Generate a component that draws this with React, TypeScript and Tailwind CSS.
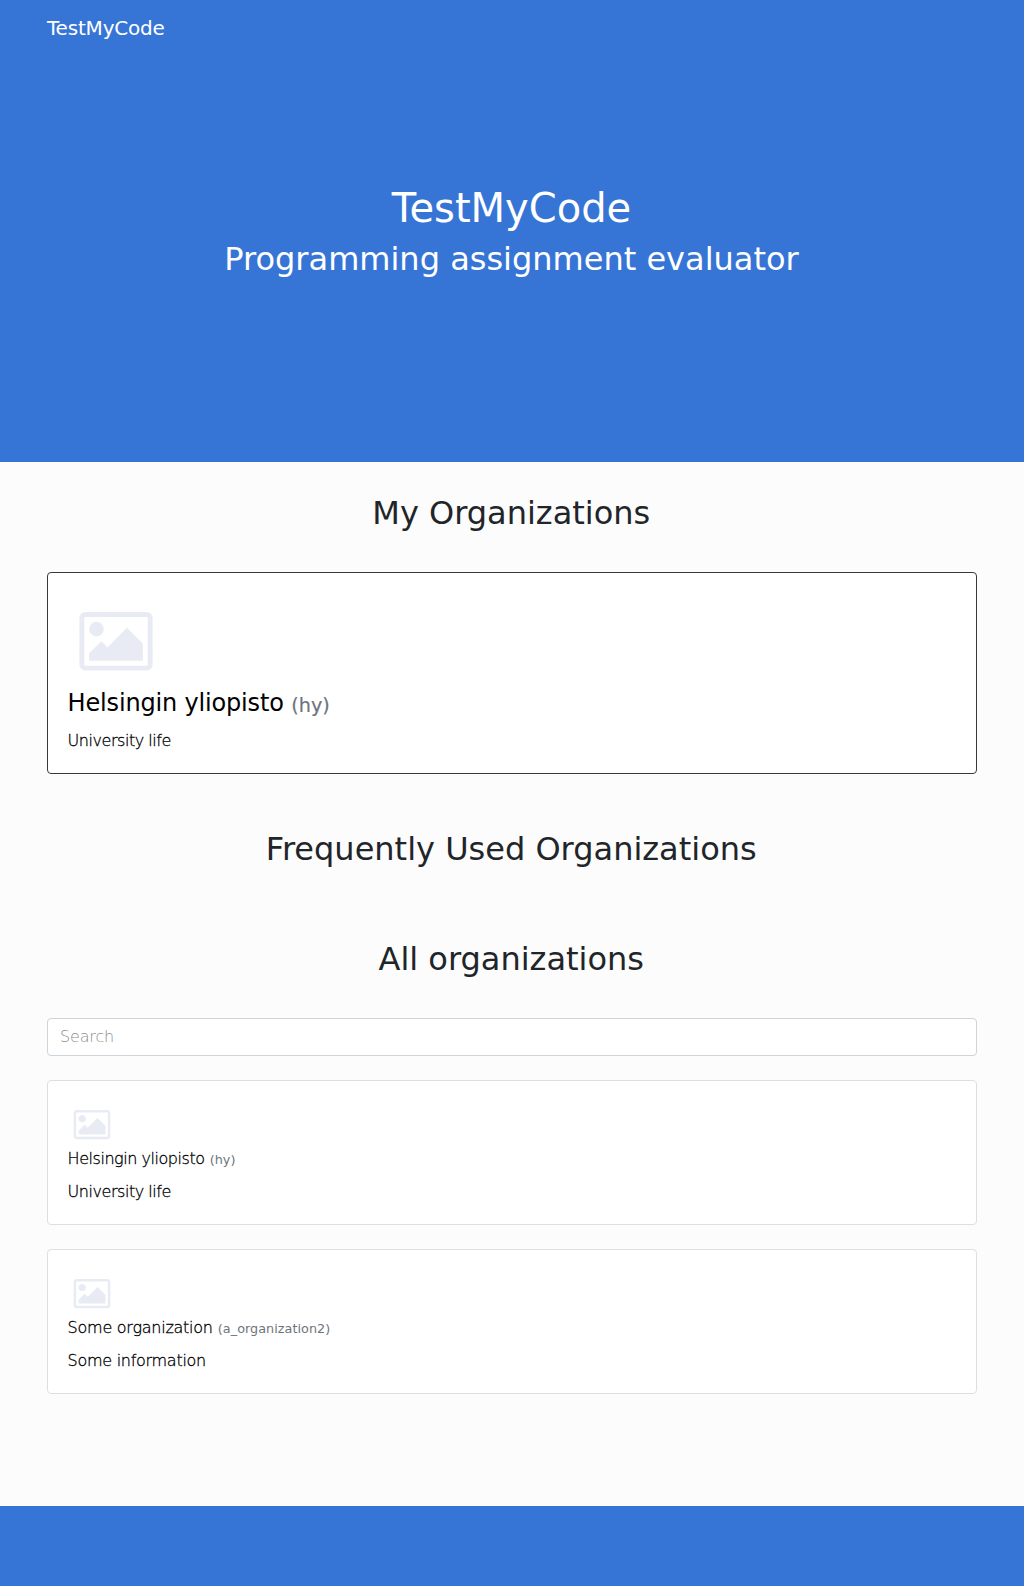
function PictureIcon({ className }: { className: string }) {
  return (
    <svg viewBox="64 128 1920 1536" className={className} fill="#e8ebf3" aria-hidden="true">
      <path d="M704 576q0 80-56 136t-136 56-136-56-56-136 56-136 136-56 136 56 56 136zm1024 384v448h-1408v-192l320-320 160 160 512-512zm96-704h-1600q-13 0-22.5 9.5t-9.5 22.5v1216q0 13 9.5 22.5t22.5 9.5h1600q13 0 22.5-9.5t9.5-22.5v-1216q0-13-9.5-22.5t-22.5-9.5zm160 32v1216q0 66-47 113t-113 47h-1600q-66 0-113-47t-47-113v-1216q0-66 47-113t113-47h1600q66 0 113 47t47 113z" />
    </svg>
  );
}

function SectionTitle({ children }: { children: string }) {
  return (
    <h2 className="pr-[1.5px] pb-2 text-center text-[32px] leading-[38.4px] font-normal">{children}</h2>
  );
}

type Organization = { name: string; slug: string; info: string; nameTracking: string; infoTracking: string };

function OrganizationCard({ name, slug, info, nameTracking, infoTracking }: Organization) {
  return (
    <a className="mb-6 block h-[145px] rounded border border-[#dfdfdf] bg-white px-[19.6px] py-5 text-black">
      <div className="h-[46px] pt-[9.4px] pl-[5.4px]">
        <PictureIcon className="block h-[29.3px] w-[38px]" />
      </div>
      <h4 className="mb-[9px] text-base leading-6 font-light">
        <span className={`${nameTracking} [-webkit-text-stroke:0.3px_black]`}>{name}</span>{" "}
        <small className="text-[12.8px] leading-none font-normal tracking-[0.03px] text-[#6c757d]">({slug})</small>
      </h4>
      <p className={`leading-6 ${infoTracking} [-webkit-text-stroke:0.3px_black]`}>{info}</p>
    </a>
  );
}

const organizations: Organization[] = [
  {
    name: "Helsingin yliopisto",
    slug: "hy",
    info: "University life",
    nameTracking: "tracking-[-0.46px]",
    infoTracking: "tracking-[-0.46px]",
  },
  {
    name: "Some organization",
    slug: "a_organization2",
    info: "Some information",
    nameTracking: "tracking-[-0.25px]",
    infoTracking: "tracking-[-0.28px]",
  },
];

export default function App() {
  return (
    <div className="flex h-[1586px] flex-col bg-[#fcfcfc] font-['DejaVu_Sans',sans-serif] text-base font-light text-[#212529]">
      <header className="h-[462px] bg-[#3675d6] font-normal text-white">
        <nav className="flex h-14 items-center px-[47px] text-xl leading-[30px] tracking-[-0.2px]">TestMyCode</nav>
        <div className="pt-32 pr-px text-center">
          <h1 className="mb-2 text-[40px] leading-[48px]">TestMyCode</h1>
          <h2 className="text-[32px] leading-[38.4px]">Programming assignment evaluator</h2>
        </div>
      </header>

      <main className="grow px-[47px]">
        <section className="pt-8">
          <SectionTitle>My Organizations</SectionTitle>
          <a className="mt-8 block h-[202px] rounded border border-[#343a40] bg-white px-[19.6px] py-5 text-black">
            <div className="h-24 pt-[18.6px] pl-[11.4px]">
              <PictureIcon className="block h-[58.6px] w-[74px]" />
            </div>
            <h3 className="mb-[11px] text-2xl leading-[28.8px] font-normal">
              <span className="tracking-[-0.17px]">Helsingin yliopisto</span>{" "}
              <small className="relative top-px text-[19.2px] leading-none text-[#6c757d] [-webkit-text-stroke:0.2px_#6c757d]">
                (hy)
              </small>
            </h3>
            <p className="leading-6 tracking-[-0.46px] [-webkit-text-stroke:0.3px_black]">University life</p>
          </a>
        </section>

        <section className="pt-[55.4px]">
          <SectionTitle>Frequently Used Organizations</SectionTitle>
        </section>

        <section className="pt-16">
          <SectionTitle>All organizations</SectionTitle>
          <input
            type="text"
            placeholder="Search"
            className="mt-[31.4px] mb-6 block h-[38px] w-full rounded border border-[#ced4da] bg-white px-3 pt-[5px] pb-[7px] leading-6 font-light tracking-[-0.15px] outline-none placeholder:text-[#8c8c8c]"
          />
          {organizations.map((organization) => (
            <OrganizationCard key={organization.slug} {...organization} />
          ))}
        </section>
      </main>

      <footer className="h-20 bg-[#3675d6]" />
    </div>
  );
}
